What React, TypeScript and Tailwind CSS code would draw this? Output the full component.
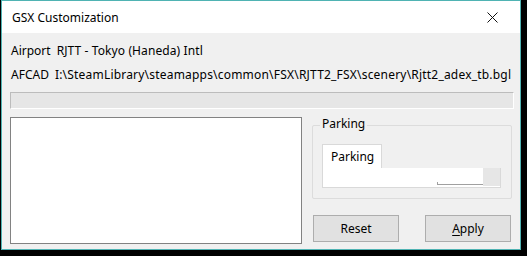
import React from 'react';

const font = { fontFamily: '"Noto Sans", "Liberation Sans", sans-serif' };

export default function App() {
  return (
    <div className="w-[527px] h-[256px] bg-black pl-[1px]" style={font}>
      <div className="w-[520px] h-[250px] border border-[#4fb3b3] bg-[#f0f0f0] flex flex-col text-[12px] text-black">
        {/* Title bar */}
        <div className="h-[32px] bg-white flex items-center justify-between pl-[10px] pr-[22px] shrink-0">
          <span className="text-[12px] leading-none mt-[1px]">GSX Customization</span>
          <svg width="11" height="11" viewBox="0 0 11 11">
            <path d="M0.5 0.5 L10.5 10.5 M10.5 0.5 L0.5 10.5" stroke="#111" strokeWidth="1" />
          </svg>
        </div>

        <div className="flex-1 flex flex-col px-[8px]">
          <div className="h-[16px] mt-[10px] flex items-center gap-[6px] pl-[1px] leading-none">
            <span>Airport</span>
            <span className="tracking-[0.1px]">RJTT - Tokyo (Haneda) Intl</span>
          </div>
          <div className="h-[16px] mt-[8px] flex items-center gap-[6px] pl-[1px] leading-none whitespace-nowrap">
            <span>AFCAD</span>
            <span className="tracking-[0.2px]">I:\SteamLibrary\steamapps\common\FSX\RJTT2_FSX\scenery\Rjtt2_adex_tb.bgl</span>
          </div>

          {/* Progress bar */}
          <div className="mt-[9px] h-[17px] w-[504px] border border-[#bcbcbc] border-r-white border-b-white bg-[#e6e6e6]" />

          <div className="mt-[8px] flex gap-[10px]">
            {/* List box */}
            <div className="w-[294px] h-[127px] bg-white border border-[#828282]" />

            <div className="flex flex-col">
              {/* Group box */}
              <div className="relative mt-[8px] w-[200px] h-[74px] border border-[#dcdcdc] rounded-[2px]">
                <span className="absolute -top-[8px] left-[7px] px-[2px] bg-[#f0f0f0] leading-none text-[12px]">Parking</span>
                <div className="mt-[18px] ml-[9px] flex flex-col">
                  <div className="w-[60px] h-[24px] bg-white border border-b-0 border-[#d9d9d9] flex items-center pl-[8px] leading-none">Parking</div>
                  <div className="w-[179px] h-[20px] bg-white border border-t-0 border-[#d9d9d9] flex items-end justify-end">
                    <div className="w-[46px] h-[3px] border-b border-l border-[#a0a0a0] mb-[2px]" />
                    <div className="w-[17px] h-[18px] bg-[#e6e6e6] self-start" />
                  </div>
                </div>
              </div>

              {/* Buttons */}
              <div className="mt-[16px] ml-[1px] flex gap-[26px]">
                <button className="w-[86px] h-[27px] bg-[#e1e1e1] border border-[#adadad] leading-none">Reset</button>
                <button className="w-[86px] h-[27px] bg-[#e1e1e1] border border-[#adadad] leading-none">
                  <span className="underline underline-offset-2">A</span>pply
                </button>
              </div>
            </div>
          </div>
        </div>
      </div>
    </div>
  );
}
